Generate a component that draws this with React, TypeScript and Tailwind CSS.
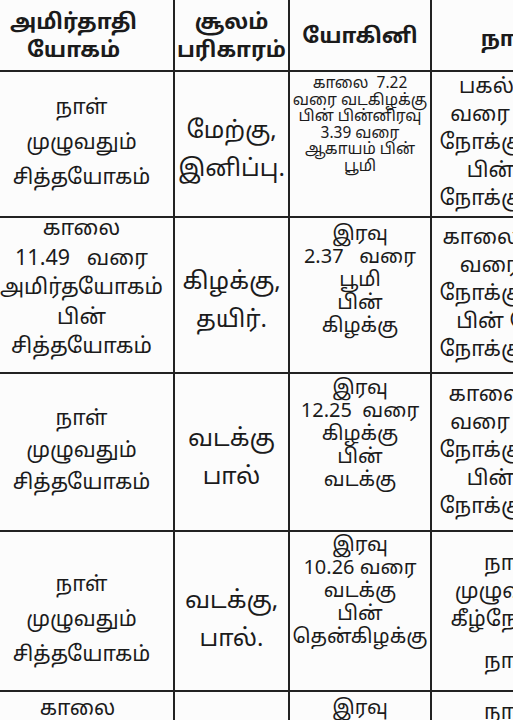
import React from "react";

type Cell = { lines: string[]; cls: string; lastCls?: string };

const F = "font-['Noto_Sans_Tamil','Lohit_Tamil','Noto_Sans',sans-serif]";

function C({ c, w, last }: { c: Cell; w: string; last?: boolean }) {
  return (
    <div
      className={`${w} shrink-0 flex flex-col items-center text-center whitespace-pre text-[#1b1b1b] ${last ? "" : "border-r-2 border-[#222]"} ${c.cls}`}
    >
      {c.lines.map((l, i) => (
        <span key={i} className={`block ${i === c.lines.length - 1 && c.lastCls ? c.lastCls : ""}`}>
          {l}
        </span>
      ))}
    </div>
  );
}

const W = ["w-[185px]", "w-[115px]", "w-[142px]", "w-[156px]"];

const c2 = "justify-center text-[24px] leading-[38px] pt-[14px]";
const c3 = "justify-start text-[20px] leading-[23px]";
const c4 = "justify-center text-[21px] leading-[28px]";

const rows: { h: string; cells: Cell[] }[] = [
  {
    h: "h-[146px]",
    cells: [
      { lines: ["நாள்", "முழுவதும்", "சித்தயோகம்"], cls: "justify-center text-[21px] leading-[35px]" },
      { lines: ["மேற்கு,", "இனிப்பு."], cls: c2 },
      {
        lines: ["காலை  7.22", "வரை வடகிழக்கு", "பின் பின்னிரவு", "3.39 வரை", "ஆகாயம் பின்", "பூமி"],
        cls: "justify-start text-[15.5px] leading-[16.5px] pt-[5px]",
      },
      { lines: ["பகல் 1.54", "வரை மேல்", "நோக்கு நாள்", "பின் சம", "நோக்கு நாள்"], cls: c4 },
    ],
  },
  {
    h: "h-[156px]",
    cells: [
      { lines: ["காலை", "11.49   வரை", "அமிர்தயோகம்", "பின்", "சித்தயோகம்"], cls: "justify-center text-[21.5px] leading-[29.5px] pb-[12px]" },
      { lines: ["கிழக்கு,", "தயிர்."], cls: c2 },
      { lines: ["இரவு", "2.37   வரை", "பூமி", "பின்", "கிழக்கு"], cls: `${c3} pt-[6px]` },
      { lines: ["காலை 10.12", "வரை கீழ்", "நோக்கு நாள்", "பின் மேல்", "நோக்கு நாள்"], cls: c4 },
    ],
  },
  {
    h: "h-[158px]",
    cells: [
      { lines: ["நாள்", "முழுவதும்", "சித்தயோகம்"], cls: "justify-center text-[21px] leading-[32px]" },
      { lines: ["வடக்கு", "பால்"], cls: c2 },
      { lines: ["இரவு", "12.25  வரை", "கிழக்கு", "பின்", "வடக்கு"], cls: `${c3} pt-[4px]` },
      { lines: ["காலை 9.45", "வரை மேல்", "நோக்கு நாள்", "பின் சம", "நோக்கு நாள்"], cls: c4 },
    ],
  },
  {
    h: "h-[160px]",
    cells: [
      { lines: ["நாள்", "முழுவதும்", "சித்தயோகம்"], cls: "justify-center text-[21px] leading-[35px] pt-[20px]" },
      { lines: ["வடக்கு,", "பால்."], cls: `${c2} pt-[20px]` },
      { lines: ["இரவு", "10.26 வரை", "வடக்கு", "பின்", "தென்கிழக்கு"], cls: `${c3} pt-[3px]` },
      {
        lines: ["நாள்", "முழுவதும்", "கீழ்நோக்கு", "நாள்"],
        cls: "justify-center text-[21px] leading-[28px] pt-[6px]",
        lastCls: "mt-[14px]",
      },
    ],
  },
  {
    h: "h-[160px]",
    cells: [
      { lines: ["காலை", "8.10  வரை", "சித்தயோகம்", "பின்", "அமிர்தயோகம்"], cls: "justify-start text-[21px] leading-[29px] pt-[4px] pr-[8px]" },
      { lines: ["மேற்கு,", "இனிப்பு."], cls: c2 },
      { lines: ["இரவு", "8.05 வரை", "தென்கிழக்கு", "பின்", "தெற்கு"], cls: `${c3} pt-[6px]` },
      { lines: ["நாள்", "முழுவதும்", "சமநோக்கு", "நாள்"], cls: "justify-start text-[21px] leading-[28px] pt-[8px]" },
    ],
  },
];

export default function App() {
  return (
    <div className={`w-[513px] h-[720px] overflow-hidden bg-[#fcfcfc] ${F}`}>
      <div className="ml-[-10px] w-[598px] flex flex-col">
        <div className="h-[72px] flex border-b-2 border-[#222] font-bold text-[21.5px] leading-[28px]">
          <C c={{ lines: ["அமிர்தாதி", "யோகம்"], cls: "justify-center pr-[16px] pt-[6px]" }} w={W[0]} />
          <C c={{ lines: ["சூலம்", "பரிகாரம்"], cls: "justify-center pt-[6px]" }} w={W[1]} />
          <C c={{ lines: ["யோகினி"], cls: "justify-center pt-[6px]" }} w={W[2]} />
          <C c={{ lines: ["நாள்"], cls: "justify-center pt-[12px]" }} w={W[3]} last />
        </div>
        {rows.map((r, i) => (
          <div key={i} className={`${r.h} flex border-b-2 border-[#222]`}>
            {r.cells.map((c, j) => (
              <C key={j} c={c} w={W[j]} last={j === 3} />
            ))}
          </div>
        ))}
      </div>
    </div>
  );
}
